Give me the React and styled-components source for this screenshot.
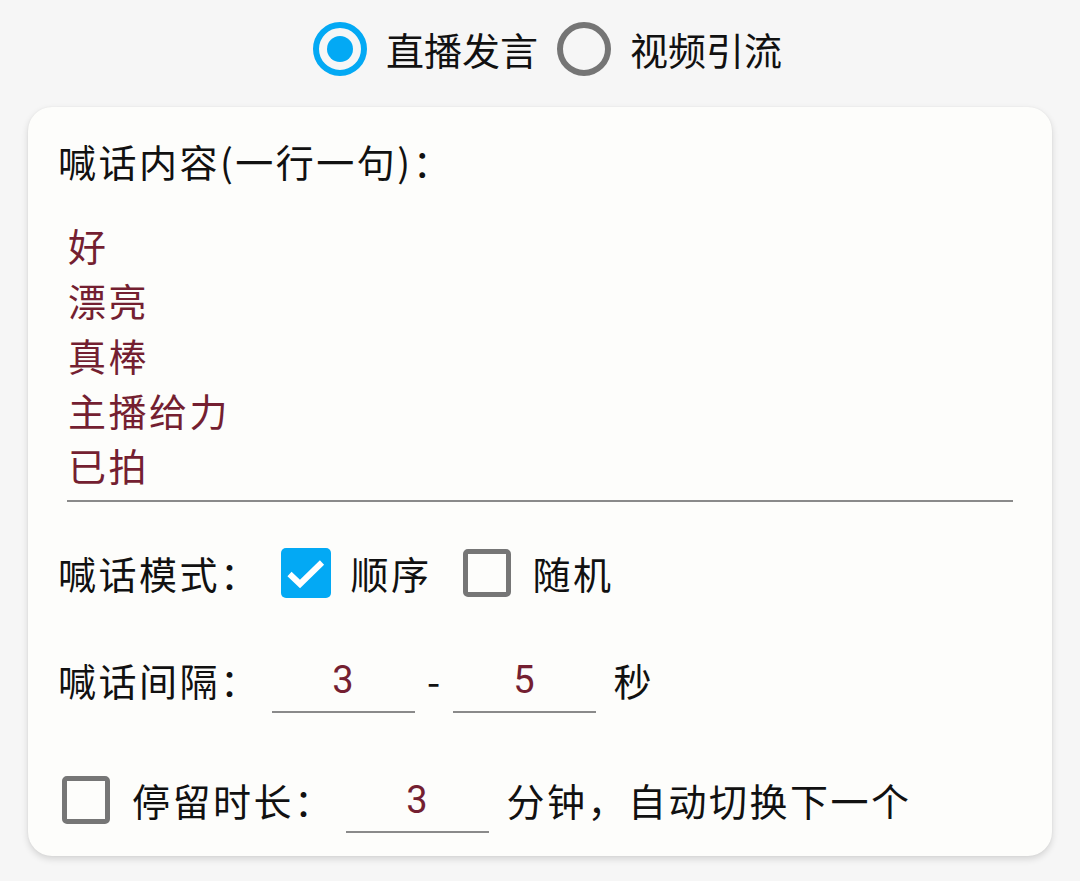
import React from 'react';
import styled, { createGlobalStyle } from 'styled-components';

const GlobalStyle = createGlobalStyle`
  html, body {
    margin: 0;
    padding: 0;
    background: #f6f6f6;
  }
  body {
    font-family: "Noto Sans CJK SC", "Noto Sans", sans-serif;
    color: #111;
  }
`;

const Page = styled.div`
  width: 1080px;
  height: 881px;
  padding-top: 22px;
  box-sizing: border-box;
`;

const ModeTabs = styled.div`
  display: flex;
  justify-content: center;
  align-items: center;
  padding-left: 15px;
  height: 54px;
`;

const RadioItem = styled.label`
  display: flex;
  align-items: center;
  gap: 19px;
  margin-right: 19px;
  font-size: 38px;
  line-height: 54px;
  &:last-child {
    margin-right: 0;
  }
`;

const RadioCircle = styled.span`
  width: 54px;
  height: 54px;
  box-sizing: border-box;
  border-radius: 50%;
  border: 6px solid ${(p) => (p.checked ? '#03a9f4' : '#757575')};
  display: flex;
  align-items: center;
  justify-content: center;
  &::after {
    content: '';
    width: 26px;
    height: 26px;
    border-radius: 50%;
    background: #03a9f4;
    display: ${(p) => (p.checked ? 'block' : 'none')};
  }
`;

const Card = styled.div`
  margin: 31px 28px 0;
  background: #fdfdfb;
  border-radius: 24px;
  box-shadow: 0 3px 7px rgba(0, 0, 0, 0.14), 0 0 2px rgba(0, 0, 0, 0.05);
  padding: 30px 30px 23px;
  font-size: 38px;
  letter-spacing: 2.5px;
`;

const Title = styled.div`
  line-height: 48px;
  white-space: nowrap;
`;

const Lines = styled.div`
  margin: 32px 9px 0;
  padding: 0 0 8px 1px;
  border-bottom: 2px solid #8a8a8a;
  color: #741f31;
  line-height: 55px;
`;

const Row = styled.div`
  display: flex;
  align-items: center;
  margin-top: ${(p) => p.top}px;
  white-space: nowrap;
`;

const Label = styled.span`
  line-height: 50px;
  margin-left: ${(p) => p.left || 0}px;
`;

const CheckBox = styled.span`
  width: ${(p) => p.size}px;
  height: ${(p) => p.size}px;
  box-sizing: border-box;
  border-radius: 5px;
  flex-shrink: 0;
  margin-left: ${(p) => p.left || 0}px;
  background: ${(p) => (p.checked ? '#03a9f4' : 'transparent')};
  border: ${(p) => (p.checked ? 'none' : '5px solid #767676')};
  display: flex;
  align-items: center;
  justify-content: center;
  svg {
    display: block;
  }
`;

const Field = styled.div`
  width: 143px;
  height: 66px;
  box-sizing: border-box;
  border-bottom: 2px solid #8a8a8a;
  margin-left: ${(p) => p.left || 0}px;
  text-align: center;
  line-height: 66px;
  letter-spacing: 0;
  color: #741f31;
  font-family: "Roboto", "Noto Sans", sans-serif;
`;

const Dash = styled.span`
  width: 38px;
  text-align: center;
  letter-spacing: 0;
  line-height: 50px;
`;

const CheckMark = () => (
  <svg width="50" height="50" viewBox="0 0 50 50">
    <path d="M8.5 26 L19 36 L41 14.5" fill="none" stroke="#fff" strokeWidth="6" />
  </svg>
);

const lines = ['好', '漂亮', '真棒', '主播给力', '已拍'];

export default function App() {
  return (
    <>
      <GlobalStyle />
      <Page>
        <ModeTabs>
          <RadioItem>
            <RadioCircle checked />
            直播发言
          </RadioItem>
          <RadioItem>
            <RadioCircle />
            视频引流
          </RadioItem>
        </ModeTabs>

        <Card>
          <Title>喊话内容(一行一句)：</Title>
          <Lines>
            {lines.map((l) => (
              <div key={l}>{l}</div>
            ))}
          </Lines>

          <Row top={46}>
            <Label>喊话模式：</Label>
            <CheckBox size={50} left={20} checked>
              <CheckMark />
            </CheckBox>
            <Label left={20}>顺序</Label>
            <CheckBox size={48} left={31} />
            <Label left={22}>随机</Label>
          </Row>

          <Row top={49}>
            <Label>喊话间隔：</Label>
            <Field left={11}>3</Field>
            <Dash>-</Dash>
            <Field>5</Field>
            <Label left={18}>秒</Label>
          </Row>

          <Row top={54}>
            <CheckBox size={48} left={4} />
            <Label left={22}>停留时长：</Label>
            <Field left={11}>3</Field>
            <Label left={18}>分钟，自动切换下一个</Label>
          </Row>
        </Card>
      </Page>
    </>
  );
}
